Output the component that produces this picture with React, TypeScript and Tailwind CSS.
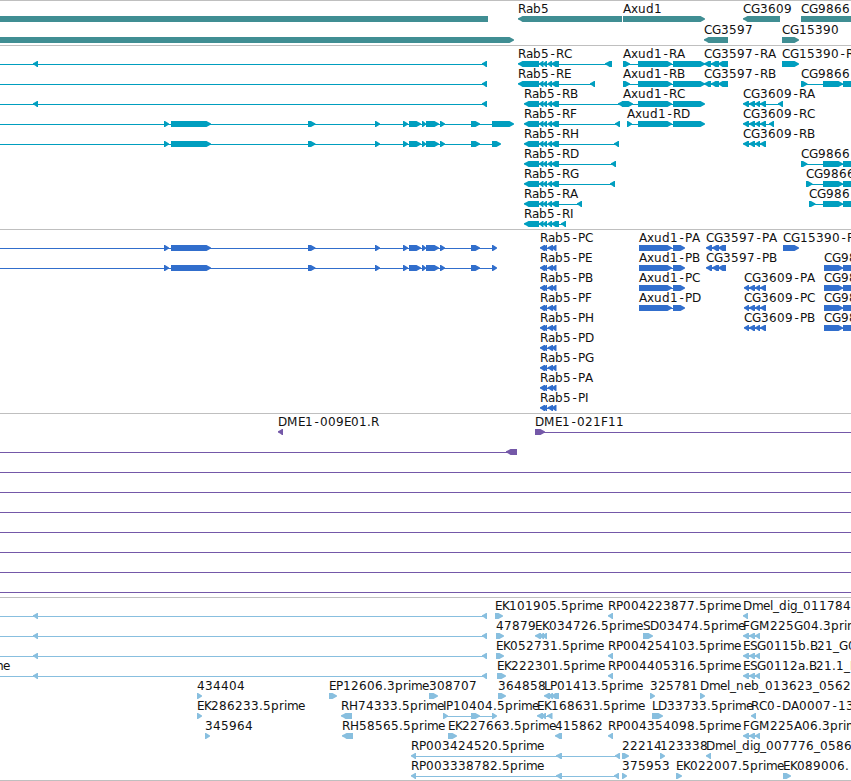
type Dir = 'left' | 'right'

type Feature = {
  name?: string
  // Label position, when it differs from the first exon
  at?: number
  dir?: Dir
  exons?: [number, number][]
  line?: [number, number]
}

type TrackData = {
  id: string
  color: string
  rowClass: string
  padClass: string
  rows: Feature[][]
}

const VIEW_WIDTH = 851
const HEAD = 5.5

// Whole-pixel advances for the label font
const ADVANCE: Record<string, number> = {
  A: 8, B: 7, C: 8, D: 9, E: 7, F: 7, G: 9, H: 9, I: 3, J: 4, K: 7, L: 6, M: 11, P: 7, R: 8, S: 7,
  a: 7, b: 8, d: 8, e: 7, g: 7, i: 3, l: 3, m: 11, n: 8, p: 8, r: 5, u: 8, x: 7,
  '-': 7, '.': 4, _: 6,
}

// Nudges that centre narrow glyphs in their advance
const NUDGE: Record<string, number> = { '-': 1.5 }

function charPositions(text: string, start: number) {
  let x = start
  return text
    .split('')
    .map((ch) => {
      const pos = x + (NUDGE[ch] ?? 0)
      x += ADVANCE[ch] ?? 8
      return pos
    })
    .join(' ')
}

function exonPoints(x1: number, x2: number, dir: Dir) {
  const head = Math.min(HEAD, x2 - x1)
  if (dir === 'right') {
    return `${x1},15 ${x2 - head + 1},15 ${x2 - head / 2 + 0.5},16.2 ${x2},17.4 ${x2},18.6 ${x2 - head / 2 + 0.5},19.8 ${x2 - head + 1},21 ${x1},21`
  }
  return `${x2},15 ${x1 + head - 1},15 ${x1 + head / 2 - 0.5},16.2 ${x1},17.2 ${x1},18.4 ${x1 + head / 2 - 0.5},19.6 ${x1 + head - 1},21 ${x2},21`
}

const left = (name: string, ...exons: [number, number][]): Feature => ({ name, dir: 'left', exons })
const right = (name: string, ...exons: [number, number][]): Feature => ({ name, dir: 'right', exons })

const rab5Tail: [number, number][] = [[539, 543.5], [543, 547], [547.5, 552], [551, 559]]
const rab5 = (name: string, start: number, ...last: [number, number][]) =>
  left(name, [start, 539], ...rab5Tail, ...last)
const rab5P = (name: string) => left(name, [540, 545], [543, 547], [547.5, 553], [551.5, 556.5])
const axud = (name: string, ...first: [number, number][]) => right(name, ...first, [638, 672], [673, 705])
const axudP = (name: string) => right(name, [639, 672], [673, 685])
const cg3597 = (name: string) => left(name, [704, 711], [711, 719], [718, 728])
const cg3597P = (name: string) => left(name, [706, 712], [712, 719], [718, 726])
const cg3609 = (name: string, ...last: [number, number][]) =>
  left(name, [743, 749], [749, 755], [755, 760], [760, 766], ...last)
const cg3609P = (name: string) => left(name, [744, 749], [749, 755], [755, 760], [760, 766])
const cg9866 = (name: string, start: number) => right(name, [start, start + 6.5], [823, 843], [843, 870])
const cg9866P = () => right('CG98', [824, 843], [843, 870])
const fgm = (name: string) => left(name, [743, 749], [749, 755], [755, 760])

const longIntron = (): Feature => ({ dir: 'left', exons: [[33, 38], [482, 487]], line: [0, 487] })
const upstream = (last: [number, number]): Feature => ({
  dir: 'right',
  line: [0, last[0]],
  exons: [
    [164, 169], [171, 211], [308, 315.5], [375, 380], [403, 408], [409, 421],
    [422, 426], [426, 439], [440, 445], [471, 480], last,
  ],
})
const span = (): Feature => ({ line: [0, VIEW_WIDTH] })

const tracks: TrackData[] = [
  {
    id: 'genes',
    color: '#408e93',
    rowClass: 'h-[21px]',
    padClass: 'pb-0.5',
    rows: [
      [
        { dir: 'left', exons: [[-20, 488]] },
        left('Rab5', [518, 622]),
        right('Axud1', [623, 705]),
        left('CG3609', [743, 780]),
        right('CG9866', [801, 870]),
      ],
      [{ dir: 'right', exons: [[0, 514]] }, left('CG3597', [704, 728]), right('CG15390', [782, 799])],
    ],
  },
  {
    id: 'transcripts',
    color: '#009ebf',
    rowClass: 'h-5',
    padClass: 'pb-[3px]',
    rows: [
      [
        longIntron(),
        rab5('Rab5-RC', 518, [605, 612]),
        axud('Axud1-RA', [623, 630]),
        cg3597('CG3597-RA'),
        right('CG15390-R', [782, 799]),
      ],
      [
        { dir: 'left', exons: [[482, 487]], line: [0, 487] },
        rab5('Rab5-RE', 518, [590, 595]),
        axud('Axud1-RB', [623, 630]),
        cg3597('CG3597-RB'),
        cg9866('CG9866', 801),
      ],
      [
        longIntron(),
        rab5('Rab5-RB', 524, [618, 628]),
        { ...axud('Axud1-RC', [622, 633]), at: 623 },
        cg3609('CG3609-RA', [778, 783]),
      ],
      [
        upstream([492, 514]),
        rab5('Rab5-RF', 524, [615, 620]),
        axud('Axud1-RD', [627, 632]),
        cg3609('CG3609-RC', [769, 774]),
      ],
      [upstream([492, 501]), rab5('Rab5-RH', 524, [614, 619]), cg3609('CG3609-RB')],
      [rab5('Rab5-RD', 524, [611, 616]), cg9866('CG9866', 801)],
      [rab5('Rab5-RG', 524, [610, 615]), cg9866('CG9866', 806)],
      [rab5('Rab5-RA', 524, [577, 582]), cg9866('CG986', 809)],
      [rab5('Rab5-RI', 524, [561, 566])],
    ],
  },
  {
    id: 'proteins',
    color: '#316ecc',
    rowClass: 'h-5',
    padClass: 'pb-[3px]',
    rows: [
      [
        upstream([492, 497]),
        rab5P('Rab5-PC'),
        axudP('Axud1-PA'),
        cg3597P('CG3597-PA'),
        right('CG15390-P', [783, 799]),
      ],
      [upstream([492, 497]), rab5P('Rab5-PE'), axudP('Axud1-PB'), cg3597P('CG3597-PB'), cg9866P()],
      [rab5P('Rab5-PB'), axudP('Axud1-PC'), cg3609P('CG3609-PA'), cg9866P()],
      [rab5P('Rab5-PF'), axudP('Axud1-PD'), cg3609P('CG3609-PC'), cg9866P()],
      [rab5P('Rab5-PH'), cg3609P('CG3609-PB'), cg9866P()],
      [rab5P('Rab5-PD')],
      [rab5P('Rab5-PG')],
      [rab5P('Rab5-PA')],
      [rab5P('Rab5-PI')],
    ],
  },
  {
    id: 'clones',
    color: '#7458a8',
    rowClass: 'h-5',
    padClass: 'pb-[3px]',
    rows: [
      [
        left('DME1-009E01.R', [278, 283]),
        { name: 'DME1-021F11', dir: 'right', exons: [[535, 545]], line: [535, VIEW_WIDTH] },
      ],
      [{ dir: 'left', exons: [[506, 517]], line: [0, 517] }],
      [span()],
      [span()],
      [span()],
      [span()],
      [span()],
      [span()],
      [span()],
    ],
  },
  {
    id: 'ests',
    color: '#88bfdf',
    rowClass: 'h-5',
    padClass: 'pb-0.5',
    rows: [
      [
        longIntron(),
        right('EK101905.5prime', [495, 503]),
        left('RP004223877.5prime', [608, 613]),
        left('Dmel_dig_011784', [743, 748]),
      ],
      [
        longIntron(),
        right('47879', [496, 504]),
        left('EK034726.5prime', [535, 541], [539, 544], [542, 547]),
        right('SD03474.5prime', [643, 653]),
        fgm('FGM225G04.3prim'),
      ],
      [
        longIntron(),
        right('EK052731.5prime', [496, 504]),
        left('RP004254103.5prime', [608, 613]),
        fgm('ESG0115b.B21_G0'),
      ],
      [
        longIntron(),
        { name: 'me', at: -8 },
        right('EK222301.5prime', [497, 506]),
        left('RP004405316.5prime', [608, 613]),
        fgm('ESG0112a.B21.1_F'),
      ],
      [
        right('434404', [197, 202]),
        right('EP12606.3prime', [329, 337]),
        right('308707', [429, 438]),
        right('364858', [498, 506]),
        left('LP01413.5prime', [544, 550], [548, 553], [551, 559]),
        right('325781', [650, 655]),
        right('Dmel_neb_013623_0562', [700, 705]),
      ],
      [
        right('EK286233.5prime', [197, 202]),
        left('RH74333.5prime', [341, 352]),
        right('IP10404.5prime', [443, 448], [471, 480], [492, 497]),
        left('EK168631.5prime', [537, 543], [541, 546], [547, 552.5]),
        right('LD33733.5prime', [652, 663]),
        left('RC0-DA0007-13', [751, 756]),
      ],
      [
        right('345964', [205, 210]),
        left('RH58565.5prime', [342, 353]),
        right('EK227663.5prime', [448, 457]),
        left('415862', [555, 562]),
        left('RP004354098.5prime', [608, 613]),
        fgm('FGM225A06.3prim'),
      ],
      [
        left('RP003424520.5prime', [411, 416], [556, 562], [615, 620]),
        right('22214', [622, 629]),
        right('123338', [660, 665]),
        left('Dmel_dig_007776_0586', [706, 711]),
      ],
      [
        left('RP003338782.5prime', [411, 416], [556, 562], [614, 619]),
        right('375953', [622, 627]),
        right('EK022007.5prime', [676, 682]),
        right('EK089006.', [783, 791]),
      ],
    ],
  },
]

function FeatureGlyph({ feature, color }: { feature: Feature; color: string }) {
  const { name, dir = 'right', exons = [] } = feature
  const line = feature.line ?? (exons.length > 1 ? [exons[0][0] + 1, exons[exons.length - 1][1] - 1] : null)
  const labelX = feature.at ?? exons[0]?.[0] ?? 0

  return (
    <g>
      {line && <rect x={line[0]} y={18} width={line[1] - line[0]} height={1} fill={color} />}
      {exons.map(([x1, x2]) => (
        <polygon key={x1} points={exonPoints(x1, x2, dir)} fill={color} />
      ))}
      {name && (
        <text x={charPositions(name, labelX)} y={12} fill="#111">
          {name}
        </text>
      )}
    </g>
  )
}

function Track({ track }: { track: TrackData }) {
  return (
    <section className={`flex flex-col border-t border-[#bfbfbf] ${track.padClass}`}>
      {track.rows.map((row, i) => (
        <div key={i} className={track.rowClass}>
          <svg width={VIEW_WIDTH} height="22" className="block overflow-visible">
            {row.map((feature, j) => (
              <FeatureGlyph key={j} feature={feature} color={track.color} />
            ))}
          </svg>
        </div>
      ))}
    </section>
  )
}

export default function App() {
  return (
    <main className="flex w-[851px] h-[781px] flex-col overflow-hidden border-b border-[#bfbfbf] bg-white font-['DejaVu_Sans',sans-serif] text-[12px]">
      {tracks.map((track) => (
        <Track key={track.id} track={track} />
      ))}
    </main>
  )
}
